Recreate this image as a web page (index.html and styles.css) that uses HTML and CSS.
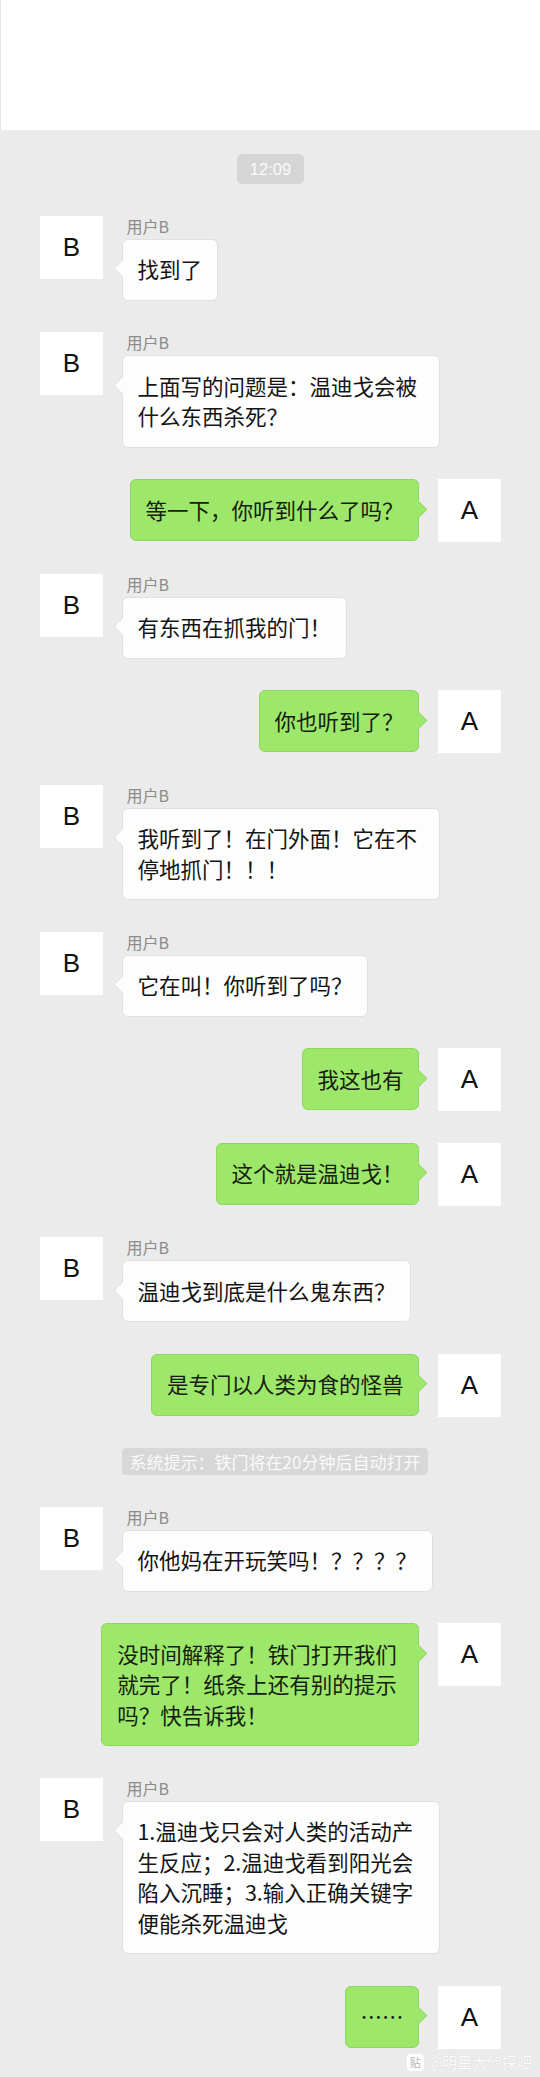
FILE: index.html
```html
<!DOCTYPE html>
<html lang="zh-CN">
<head>
<meta charset="utf-8">
<title>聊天记录</title>
<link rel="stylesheet" href="styles.css">
</head>
<body>
<div class="page">
  <div class="header"></div>
  <div class="chat">
    <div class="time"><span>12:09</span></div>

    <div class="row in">
      <div class="avatar">B</div>
      <div class="body">
        <div class="name">用户B</div>
        <div class="bubble">找到了</div>
      </div>
    </div>

    <div class="row in">
      <div class="avatar">B</div>
      <div class="body">
        <div class="name">用户B</div>
        <div class="bubble">上面写的问题是：温迪戈会被什么东西杀死？</div>
      </div>
    </div>

    <div class="row out">
      <div class="bubble green">等一下，你听到什么了吗？</div>
      <div class="avatar">A</div>
    </div>

    <div class="row in">
      <div class="avatar">B</div>
      <div class="body">
        <div class="name">用户B</div>
        <div class="bubble">有东西在抓我的门！</div>
      </div>
    </div>

    <div class="row out">
      <div class="bubble green">你也听到了？</div>
      <div class="avatar">A</div>
    </div>

    <div class="row in">
      <div class="avatar">B</div>
      <div class="body">
        <div class="name">用户B</div>
        <div class="bubble">我听到了！在门外面！它在不停地抓门！！！</div>
      </div>
    </div>

    <div class="row in">
      <div class="avatar">B</div>
      <div class="body">
        <div class="name">用户B</div>
        <div class="bubble">它在叫！你听到了吗？</div>
      </div>
    </div>

    <div class="row out">
      <div class="bubble green">我这也有</div>
      <div class="avatar">A</div>
    </div>

    <div class="row out">
      <div class="bubble green">这个就是温迪戈！</div>
      <div class="avatar">A</div>
    </div>

    <div class="row in">
      <div class="avatar">B</div>
      <div class="body">
        <div class="name">用户B</div>
        <div class="bubble">温迪戈到底是什么鬼东西？</div>
      </div>
    </div>

    <div class="row out">
      <div class="bubble green">是专门以人类为食的怪兽</div>
      <div class="avatar">A</div>
    </div>

    <div class="notice"><span>系统提示：铁门将在20分钟后自动打开</span></div>

    <div class="row in">
      <div class="avatar">B</div>
      <div class="body">
        <div class="name">用户B</div>
        <div class="bubble">你他妈在开玩笑吗！？？？？</div>
      </div>
    </div>

    <div class="row out">
      <div class="bubble green">没时间解释了！铁门打开我们就完了！纸条上还有别的提示吗？快告诉我！</div>
      <div class="avatar">A</div>
    </div>

    <div class="row in">
      <div class="avatar">B</div>
      <div class="body">
        <div class="name">用户B</div>
        <div class="bubble">1.温迪戈只会对人类的活动产生反应；2.温迪戈看到阳光会陷入沉睡；3.输入正确关键字便能杀死温迪戈</div>
      </div>
    </div>

    <div class="row out">
      <div class="bubble green">……</div>
      <div class="avatar">A</div>
    </div>

    <div class="row in">
      <div class="avatar">B</div>
      <div class="body">
        <div class="name">用户B</div>
      </div>
    </div>
  </div>

  <div class="watermark">
    <span class="wm-icon">贴</span>
    <span class="wm-text">@明星大侦探吧</span>
  </div>
</div>
</body>
</html>
```

FILE: styles.css
```css
html, body {
  margin: 0;
  padding: 0;
  overflow: hidden;
}

body {
  background: #ebebeb;
  font-family: "Noto Sans CJK SC", "Noto Sans", sans-serif;
  color: #161616;
}

.page {
  position: relative;
  width: 540px;
  height: 2077px;
  overflow: hidden;
  background: #ebebeb;
}

.header {
  height: 130px;
  background: #ffffff;
  border-left: 1px solid #e6e6e6;
  box-sizing: border-box;
}

.chat {
  display: flex;
  flex-direction: column;
  gap: 31.5px;
  padding: 24px 39px 0 40px;
}

.time,
.notice {
  display: flex;
  justify-content: center;
}

.time span {
  display: block;
  height: 30px;
  line-height: 30px;
  padding: 0 12.5px;
  border-radius: 5px;
  background: #d5d5d5;
  color: #fafafa;
  font-family: "Liberation Sans", Arial, sans-serif;
  font-size: 16.5px;
}

.notice span {
  display: block;
  height: 27px;
  line-height: 27px;
  padding: 0 7.5px;
  margin-left: 9px;
  border-radius: 4px;
  background: #d7d7d7;
  color: #fafafa;
  font-size: 17px;
}

.row {
  display: flex;
  align-items: flex-start;
  gap: 18.6px;
}

.row.out {
  justify-content: flex-end;
}

.avatar {
  flex: 0 0 auto;
  width: 63px;
  height: 63px;
  background: #ffffff;
  display: flex;
  align-items: center;
  justify-content: center;
  font-family: "Liberation Sans", Arial, sans-serif;
  font-size: 26px;
  color: #111111;
}

.body {
  display: flex;
  flex-direction: column;
  align-items: flex-start;
}

.name {
  height: 20px;
  line-height: 20px;
  margin-bottom: 3px;
  padding-left: 5px;
  font-size: 16px;
  color: #8c8c8c;
}

.bubble {
  position: relative;
  box-sizing: border-box;
  max-width: 318px;
  padding: 14.75px 14.8px;
  font-size: 21.5px;
  line-height: 30.5px;
  background: #fdfdfd;
  border: 1px solid #e0e0e0;
  border-radius: 6px;
  color: #141414;
}

.bubble::before {
  content: "";
  position: absolute;
  top: 22.5px;
  left: -7px;
  width: 12px;
  height: 12px;
  background: #fdfdfd;
  border-left: 1px solid #e0e0e0;
  border-bottom: 1px solid #e0e0e0;
  border-bottom-left-radius: 2px;
  transform: rotate(45deg);
}

.bubble.green {
  background: #9de86a;
  border-color: #8ed65c;
  color: #162010;
}

.bubble.green::before {
  left: auto;
  right: -7px;
  background: #9de86a;
  border: none;
  border-top: 1px solid #8ed65c;
  border-right: 1px solid #8ed65c;
  border-radius: 0 2px 0 0;
}

.watermark {
  position: absolute;
  right: 8px;
  bottom: 5px;
  display: flex;
  align-items: center;
  gap: 4px;
}

.wm-icon {
  display: flex;
  align-items: center;
  justify-content: center;
  width: 17px;
  height: 17px;
  border-radius: 4px;
  background: rgba(255, 255, 255, 0.92);
  color: #b5b5b5;
  font-size: 11px;
  line-height: 1;
}

.wm-text {
  font-size: 15px;
  line-height: 20px;
  color: rgba(255, 255, 255, 0.95);
  text-shadow: 0 0 1px rgba(0, 0, 0, 0.15);
}
```
